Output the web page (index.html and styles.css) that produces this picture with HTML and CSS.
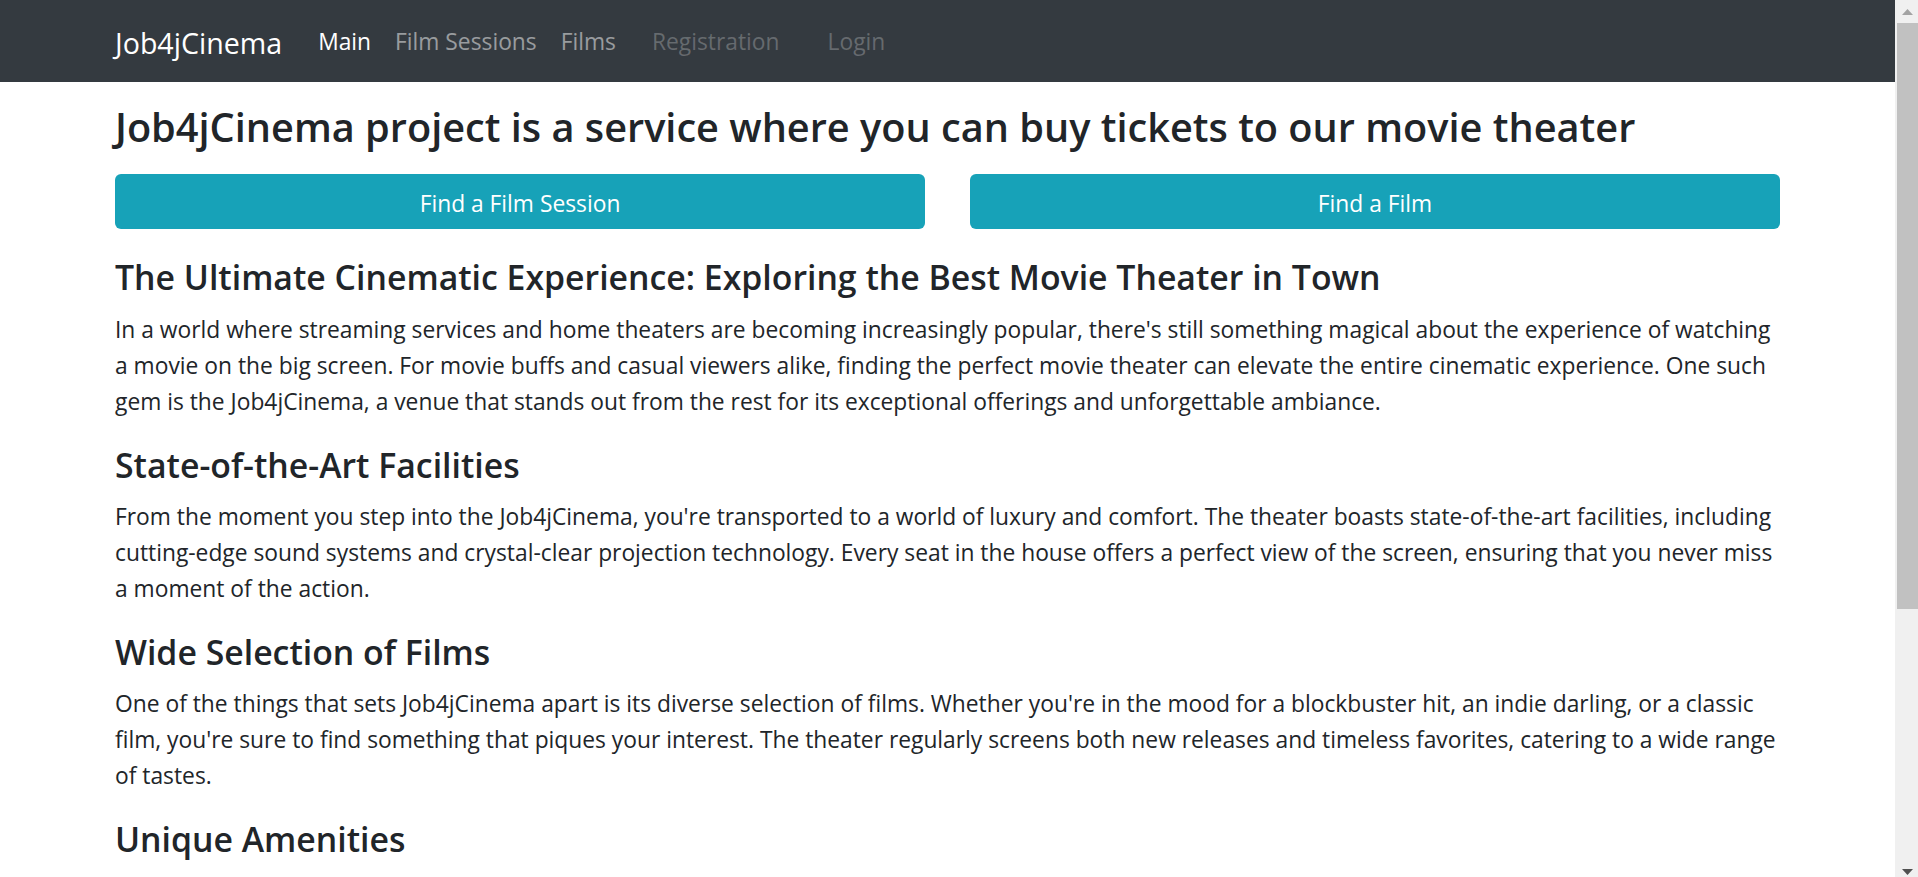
FILE: index.html
```html
<!DOCTYPE html>
<html lang="en">
<head>
<meta charset="utf-8">
<title>Job4jCinema</title>
<link rel="stylesheet" href="styles.css">
</head>
<body>
<div class="page">
  <div class="main">
    <header class="navbar">
      <div class="container nav-inner">
        <a class="brand" href="#">Job4jCinema</a>
        <nav class="nav">
          <a class="nav-link active" href="#">Main</a>
          <a class="nav-link" href="#">Film Sessions</a>
          <a class="nav-link" href="#">Films</a>
          <a class="nav-link disabled reg" href="#">Registration</a>
          <a class="nav-link disabled login" href="#">Login</a>
        </nav>
      </div>
    </header>
    <main class="container content">
      <h1 class="title">Job4jCinema project is a service where you can buy tickets to our movie theater</h1>
      <div class="actions">
        <a class="btn" href="#">Find a Film Session</a>
        <a class="btn" href="#">Find a Film</a>
      </div>
      <h2 class="section-title">The Ultimate Cinematic Experience: Exploring the Best Movie Theater in Town</h2>
      <p>In a world where streaming services and home theaters are becoming increasingly popular, there's still something magical about the experience of watching a movie on the big screen. For movie buffs and casual viewers alike, finding the perfect movie theater can elevate the entire cinematic experience. One such gem is the Job4jCinema, a venue that stands out from the rest for its exceptional offerings and unforgettable ambiance.</p>
      <h2 class="section-title">State-of-the-Art Facilities</h2>
      <p>From the moment you step into the Job4jCinema, you're transported to a world of luxury and comfort. The theater boasts state-of-the-art facilities, including cutting-edge sound systems and crystal-clear projection technology. Every seat in the house offers a perfect view of the screen, ensuring that you never miss a moment of the action.</p>
      <h2 class="section-title">Wide Selection of Films</h2>
      <p>One of the things that sets Job4jCinema apart is its diverse selection of films. Whether you're in the mood for a blockbuster hit, an indie darling, or a classic film, you're sure to find something that piques your interest. The theater regularly screens both new releases and timeless favorites, catering to a wide range of tastes.</p>
      <h2 class="section-title">Unique Amenities</h2>
      <p>Beyond the films themselves, Job4jCinema offers a host of unique amenities that make every visit special. From plush reclining seats and a gourmet concession stand to themed screenings and special events, the theater goes above and beyond to create a memorable experience for every guest who walks through its doors.</p>
      <h2 class="section-title">Conclusion</h2>
      <p>Whether you're a dedicated cinephile or simply looking for a fun night out, Job4jCinema delivers an unparalleled movie-going experience. With its cutting-edge technology, diverse film selection and thoughtful amenities, it truly is the best movie theater in town.</p>
    </main>
  </div>
  <aside class="scrollbar" aria-hidden="true">
    <div class="sb-btn">
      <svg width="11" height="6" viewBox="0 0 11 6"><polygon points="5.5,0 11,6 0,6" fill="#a3a3a3"/></svg>
    </div>
    <div class="sb-thumb"></div>
    <div class="sb-fill"></div>
    <div class="sb-btn sb-down">
      <svg width="11" height="6" viewBox="0 0 11 6"><polygon points="0,0 11,0 5.5,6" fill="#505050"/></svg>
    </div>
  </aside>
</div>
</body>
</html>
```
FILE: styles.css
```css
html {
  scrollbar-width: none;
}
html::-webkit-scrollbar {
  display: none;
}
body {
  margin: 0;
  font-family: "Open Sans", "Noto Sans", sans-serif;
  font-size: 22.8px;
  line-height: 36px;
  color: #212529;
  background: #fff;
}
a {
  text-decoration: none;
}
.page {
  display: flex;
  align-items: flex-start;
}
.main {
  flex: 1;
  min-width: 0;
}
.container {
  width: 1665px;
  margin: 0 auto;
}
.navbar {
  background: #343a40;
  height: 82px;
}
.nav-inner {
  display: flex;
  align-items: center;
  height: 82px;
  padding-top: 2px;
  box-sizing: border-box;
}
.brand {
  color: #fff;
  font-size: 28.6px;
  line-height: 45px;
  margin-right: 24px;
}
.nav {
  display: flex;
  align-items: center;
}
.nav-link {
  color: rgba(255, 255, 255, 0.5);
  padding: 0 12px;
  line-height: 36px;
}
.nav-link.active {
  color: #fff;
}
.nav-link.disabled {
  color: rgba(255, 255, 255, 0.25);
}
.nav-link.reg {
  margin-left: 12px;
}
.nav-link.login {
  margin-left: 24px;
}
.content {
  padding-top: 20px;
  padding-bottom: 64px;
}
.title {
  font-size: 39.7px;
  font-weight: 600;
  line-height: 50.4px;
  margin: 0 0 22px;
}
.actions {
  display: grid;
  grid-template-columns: 1fr 1fr;
  column-gap: 45px;
  margin-bottom: 27px;
}
.btn {
  display: flex;
  align-items: center;
  justify-content: center;
  height: 55px;
  padding-top: 4px;
  box-sizing: border-box;
  background: #17a2b8;
  color: #fff;
  border-radius: 6px;
}
.section-title {
  font-size: 33.8px;
  font-weight: 600;
  line-height: 43.2px;
  margin: 0 0 12px;
}
p {
  margin: 0 0 24px;
}
.scrollbar {
  position: sticky;
  top: 0;
  width: 23px;
  height: 100vh;
  flex: none;
  background: #f0f0f0;
  display: flex;
  flex-direction: column;
}
.sb-btn {
  height: 23px;
  flex: none;
  display: flex;
  align-items: center;
  justify-content: center;
  padding-left: 2px;
  box-sizing: border-box;
}
.sb-thumb {
  height: 586px;
  margin-left: 2px;
  background: #c1c1c1;
  flex: none;
}
.sb-fill {
  flex: 1;
}
.sb-down {
  align-items: flex-end;
  padding-bottom: 2px;
}
```
